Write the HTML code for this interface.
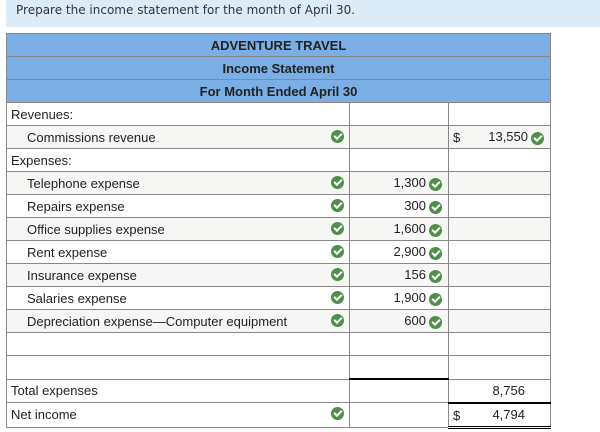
<!DOCTYPE html>
<html><head><style>
body{margin:0;width:600px;height:432px;background:#fff;font-family:"Liberation Sans",Arial,sans-serif;position:relative;overflow:hidden}
.top{position:absolute;left:6px;top:0;width:594px;height:27px;background:#dcebf8;font-family:"DejaVu Sans",sans-serif;font-size:12px;color:#333;line-height:20px;padding-left:10px;box-sizing:border-box}
table{position:absolute;left:6px;top:33px;border-collapse:collapse;width:544px;table-layout:fixed;font-size:13px;color:#222}
td{border:1px solid #888;height:22px;padding:0;position:relative;white-space:nowrap}
.h td{background:#7aaee4;text-align:center;font-weight:bold;font-size:13px;color:#222}
td.l{padding-left:4px}
td.i{padding-left:20px}
td.c2{text-align:right}
td.c3{text-align:right}
tr.g td{background:#f6f7f5}
.ck{display:inline-block;width:13px;height:13px;border-radius:50%;background:#4e8f49;vertical-align:middle;position:relative}
.ck:after{content:"";position:absolute;left:3px;top:3px;width:6px;height:3px;border-left:2px solid #fff;border-bottom:2px solid #fff;transform:rotate(-45deg)}
.lc{position:absolute;right:5px;top:4px}
.n{margin-right:3px}
.c2 .ck,.c3 .ck{margin-right:6px}
.d{position:absolute;left:4px;top:4px}
</style></head><body>
<div class="top">Prepare the income statement for the month of April 30.</div>
<table>
<colgroup><col style="width:343px"><col style="width:99px"><col style="width:102px"></colgroup>
<tr class="h"><td colspan="3">ADVENTURE TRAVEL</td></tr>
<tr class="h"><td colspan="3">Income Statement</td></tr>
<tr class="h"><td colspan="3">For Month Ended April 30</td></tr>
<tr><td class="l">Revenues:</td><td class="c2"></td><td class="c3"></td></tr>
<tr class="g"><td class="l i">Commissions revenue<span class="ck lc"></span></td><td class="c2"></td><td class="c3"><span class="d">$</span><span class="n">13,550</span><span class="ck"></span></td></tr>
<tr><td class="l">Expenses:</td><td class="c2"></td><td class="c3"></td></tr>
<tr class="g"><td class="l i">Telephone expense<span class="ck lc"></span></td><td class="c2"><span class="n">1,300</span><span class="ck"></span></td><td class="c3"></td></tr>
<tr><td class="l i">Repairs expense<span class="ck lc"></span></td><td class="c2"><span class="n">300</span><span class="ck"></span></td><td class="c3"></td></tr>
<tr class="g"><td class="l i">Office supplies expense<span class="ck lc"></span></td><td class="c2"><span class="n">1,600</span><span class="ck"></span></td><td class="c3"></td></tr>
<tr><td class="l i">Rent expense<span class="ck lc"></span></td><td class="c2"><span class="n">2,900</span><span class="ck"></span></td><td class="c3"></td></tr>
<tr class="g"><td class="l i">Insurance expense<span class="ck lc"></span></td><td class="c2"><span class="n">156</span><span class="ck"></span></td><td class="c3"></td></tr>
<tr><td class="l i">Salaries expense<span class="ck lc"></span></td><td class="c2"><span class="n">1,900</span><span class="ck"></span></td><td class="c3"></td></tr>
<tr class="g"><td class="l i">Depreciation expense—Computer equipment<span class="ck lc"></span></td><td class="c2"><span class="n">600</span><span class="ck"></span></td><td class="c3"></td></tr>
<tr><td class="l"></td><td class="c2"></td><td class="c3"></td></tr>
<tr><td class="l"></td><td class="c2"></td><td class="c3"></td></tr>
<tr><td class="l">Total expenses</td><td class="c2" style="border-top:2px solid #000"></td><td class="c3"><span class="n" style="margin-right:25px">8,756</span></td></tr>
<tr><td class="l">Net income<span class="ck lc"></span></td><td class="c2"></td><td class="c3" style="border-top:2px solid #000;border-bottom:3px double #000"><span class="d">$</span><span class="n" style="margin-right:25px">4,794</span></td></tr>
</table>
</body></html>
